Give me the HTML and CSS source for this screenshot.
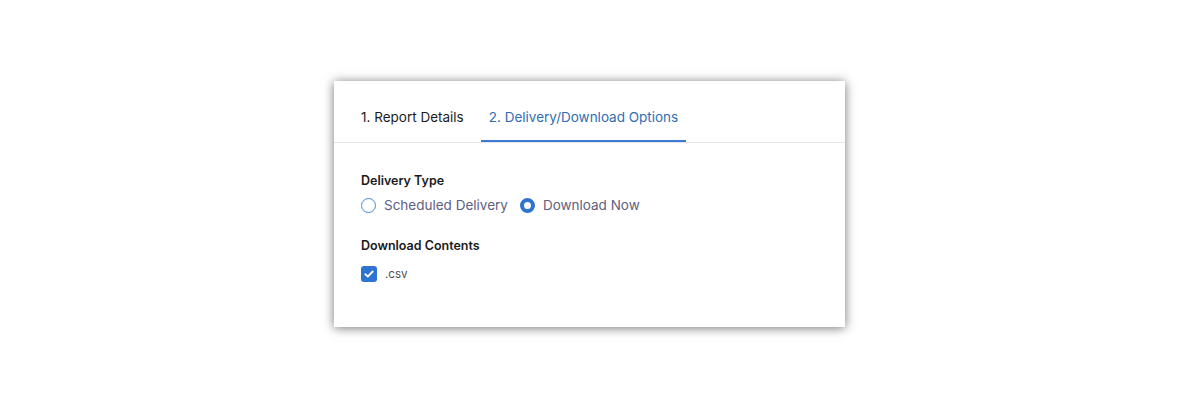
FILE: index.html
```html
<!DOCTYPE html>
<html>
<head>
<meta charset="utf-8">
<link rel="stylesheet" href="styles.css">
</head>
<body>
<div class="page">
  <div class="card">
    <div class="tabs">
      <div class="tab">1. Report Details</div>
      <div class="tab active">2. Delivery/Download Options</div>
    </div>
    <div class="body">
      <div class="field">
        <div class="label">Delivery Type</div>
        <div class="radios">
          <label class="radio"><span class="dot"></span>Scheduled Delivery</label>
          <label class="radio"><span class="dot on"></span>Download Now</label>
        </div>
      </div>
      <div class="field second">
        <div class="label">Download Contents</div>
        <label class="check">
          <span class="box"><svg width="10" height="8" viewBox="0 0 10 8"><path d="M1.3 4.2 L3.8 6.5 L8.7 1.5" fill="none" stroke="#fff" stroke-width="1.8" stroke-linecap="round" stroke-linejoin="round"/></svg></span>.csv
        </label>
      </div>
    </div>
  </div>
</div>
</body>
</html>
```
FILE: styles.css
```css
html, body { margin: 0; padding: 0; background: #fff; }
body { font-family: Inter, "Noto Sans", sans-serif; }
.page { padding: 81px 0 0 334px; min-height: 400px; box-sizing: border-box; }
.card {
  width: 511px;
  height: 246px;
  box-sizing: border-box;
  background: #fff;
  box-shadow: 0 1px 10px rgba(0,0,0,0.55);
}
.tabs {
  display: flex;
  gap: 10px;
  padding-left: 20px;
  height: 62px;
  border-bottom: 1px solid #e3e5ea;
  box-sizing: border-box;
}
.tab {
  padding: 13px 7px 0;
  font-size: 13.5px;
  color: #1c1c1c;
  display: flex;
  align-items: center;
  box-sizing: border-box;
  border-bottom: 2px solid transparent;
}
.tab.active { color: #2f6db5; border-bottom-color: #3a7bd5; padding: 13px 8px 0; }
.body { padding: 29px 27px 0; }
.label { font-size: 12.5px; font-weight: 600; color: #1a1a1a; line-height: 18px; }
.radios { display: flex; gap: 12px; margin-top: 6px; }
.radio { display: flex; align-items: center; font-size: 13.5px; color: #606080; line-height: 18px; }
.dot {
  width: 15px; height: 15px; box-sizing: border-box;
  border: 1.5px solid #4a87d8; border-radius: 50%;
  margin-right: 8px;
}
.dot.on { border: 4.5px solid #2f73d0; }
.second { margin-top: 23px; }
.check { display: flex; align-items: center; gap: 8px; font-size: 11.5px; color: #4a4a5a; margin-top: 11px; }
.box {
  width: 16px; height: 16px; border-radius: 3px; background: #2f73d0;
  display: flex; align-items: center; justify-content: center;
}
```
